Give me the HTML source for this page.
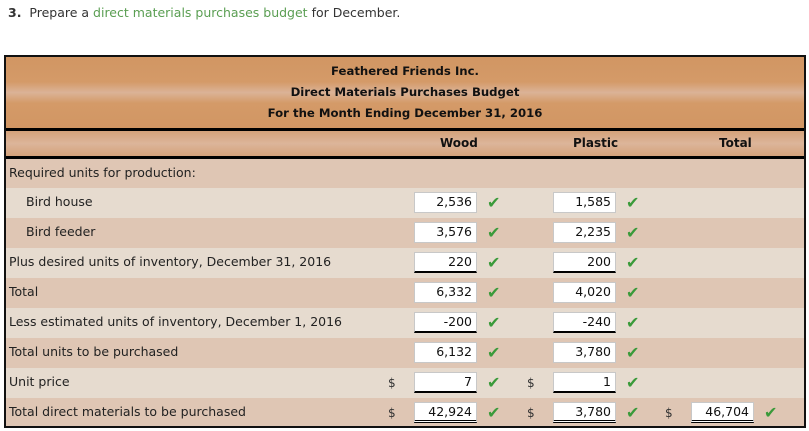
<!DOCTYPE html>
<html><head><meta charset="utf-8"><style>
body{margin:0;width:809px;height:431px;background:#fff;position:relative;font-family:Verdana,"DejaVu Sans",sans-serif;font-size:12.5px;color:#222;overflow:hidden}
.a{position:absolute}
.t{left:8px;top:5px;font-size:12.5px;color:#333}
.t a{color:#5a9e52;text-decoration:none}
.tbl{left:4px;top:55px;width:798px;height:369px;border:2px solid #111}
.hd{left:0;top:0;width:798px;height:71px;background:linear-gradient(#d19663 0%,#d49a68 35%,#dbb397 50%,#d49a68 65%,#d19663 100%);text-align:center;font-weight:bold;font-size:11.7px;color:#111}
.hd div{height:21px;line-height:21px}
.bl{left:0;width:798px;height:3px;background:#000}
.ch{left:0;top:74px;width:798px;height:25px;background:linear-gradient(#d4a27a,#dcb59a 50%,#d4a27a);font-weight:bold;color:#111;font-size:12px}
.r{left:0;width:798px;height:30px;line-height:30px}
.d{background:#dfc6b4}.l{background:#e6dbcf}
.lab{position:absolute;left:3px;top:-1px}
.in{position:absolute;top:4px;background:#fff;border:1px solid #c8c8c8;text-align:right;line-height:17px;box-sizing:border-box;padding-right:4px;width:63px;height:21px;color:#111}
.u{border-bottom:2px solid #000}
.dd{border-bottom:3px double #000}
.ck{position:absolute;top:0;color:#3a9a3a;font-weight:bold;font-size:16px}
.s{position:absolute;top:0;font-size:12px;color:#333}
</style></head><body>
<div class="a t"><b>3.</b>&nbsp; Prepare a <a>direct materials purchases budget</a> for December.</div>
<div class="a tbl">
<div class="a hd"><div style="margin-top:4px">Feathered Friends Inc.</div><div>Direct Materials Purchases Budget</div><div>For the Month Ending December 31, 2016</div></div>
<div class="a bl" style="top:71px"></div>
<div class="a ch"><span class="a" style="left:434px;top:5px">Wood</span><span class="a" style="left:567px;top:5px">Plastic</span><span class="a" style="left:713px;top:5px">Total</span></div>
<div class="a bl" style="top:99px"></div>

<div class="a r d" style="top:102px"><span class="lab">Required units for production:</span></div>
<div class="a r l" style="top:131px"><span class="lab" style="left:20px">Bird house</span>
<span class="in" style="left:408px">2,536</span><span class="ck" style="left:481px">✔</span>
<span class="in" style="left:547px">1,585</span><span class="ck" style="left:620px">✔</span></div>
<div class="a r d" style="top:161px"><span class="lab" style="left:20px">Bird feeder</span>
<span class="in" style="left:408px">3,576</span><span class="ck" style="left:481px">✔</span>
<span class="in" style="left:547px">2,235</span><span class="ck" style="left:620px">✔</span></div>
<div class="a r l" style="top:191px"><span class="lab">Plus desired units of inventory, December 31, 2016</span>
<span class="in u" style="left:408px">220</span><span class="ck" style="left:481px">✔</span>
<span class="in u" style="left:547px">200</span><span class="ck" style="left:620px">✔</span></div>
<div class="a r d" style="top:221px"><span class="lab">Total</span>
<span class="in" style="left:408px">6,332</span><span class="ck" style="left:481px">✔</span>
<span class="in" style="left:547px">4,020</span><span class="ck" style="left:620px">✔</span></div>
<div class="a r l" style="top:251px"><span class="lab">Less estimated units of inventory, December 1, 2016</span>
<span class="in u" style="left:408px">-200</span><span class="ck" style="left:481px">✔</span>
<span class="in u" style="left:547px">-240</span><span class="ck" style="left:620px">✔</span></div>
<div class="a r d" style="top:281px"><span class="lab">Total units to be purchased</span>
<span class="in" style="left:408px">6,132</span><span class="ck" style="left:481px">✔</span>
<span class="in" style="left:547px">3,780</span><span class="ck" style="left:620px">✔</span></div>
<div class="a r l" style="top:311px"><span class="lab">Unit price</span>
<span class="s" style="left:382px">$</span><span class="in u" style="left:408px">7</span><span class="ck" style="left:481px">✔</span>
<span class="s" style="left:521px">$</span><span class="in u" style="left:547px">1</span><span class="ck" style="left:620px">✔</span></div>
<div class="a r d" style="top:341px;height:28px"><span class="lab">Total direct materials to be purchased</span>
<span class="s" style="left:382px">$</span><span class="in dd" style="left:408px">42,924</span><span class="ck" style="left:481px">✔</span>
<span class="s" style="left:521px">$</span><span class="in dd" style="left:547px">3,780</span><span class="ck" style="left:620px">✔</span>
<span class="s" style="left:659px">$</span><span class="in dd" style="left:685px">46,704</span><span class="ck" style="left:758px">✔</span></div>
</div>
</body></html>
